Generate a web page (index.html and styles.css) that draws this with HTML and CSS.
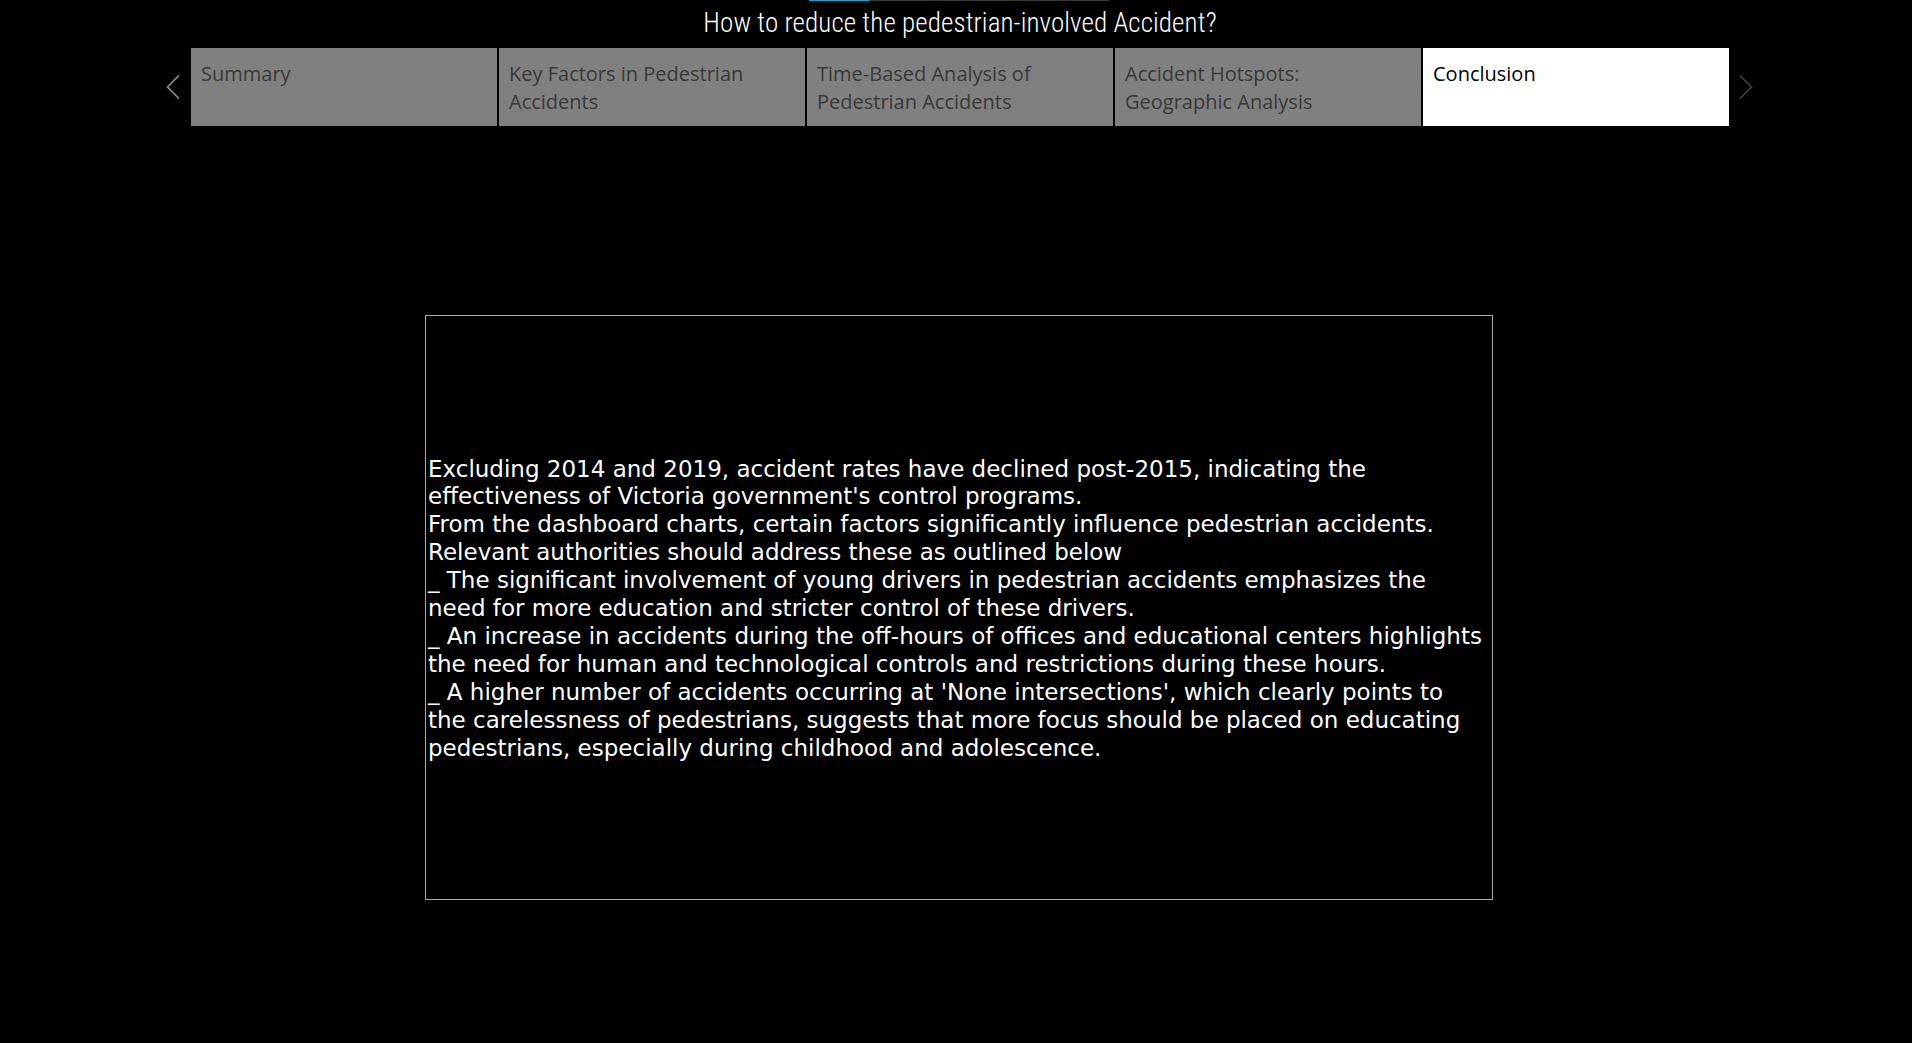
FILE: index.html
```html
<!DOCTYPE html>
<html lang="en">
<head>
<meta charset="utf-8">
<title>How to reduce the pedestrian-involved Accident?</title>
<link rel="stylesheet" href="styles.css">
</head>
<body>
<div class="dash">
  <div class="progress"><div class="progress-fill"></div></div>
  <h1 class="title">How to reduce the pedestrian-involved Accident?</h1>
  <nav class="storybar">
    <button class="arrow arrow-prev" aria-label="Previous">
      <svg width="14" height="24" viewBox="0 0 14 24"><polyline points="13,0.5 1.5,12 13,23.5" fill="none" stroke="currentColor" stroke-width="1.7"/></svg>
    </button>
    <div class="tabs">
      <div class="tab">Summary</div>
      <div class="tab">Key Factors in Pedestrian<br>Accidents</div>
      <div class="tab">Time-Based Analysis of<br>Pedestrian Accidents</div>
      <div class="tab">Accident Hotspots:<br>Geographic Analysis</div>
      <div class="tab tab-active">Conclusion</div>
    </div>
    <button class="arrow arrow-next" aria-label="Next">
      <svg width="14" height="24" viewBox="0 0 14 24"><polyline points="1,0.5 12.5,12 1,23.5" fill="none" stroke="currentColor" stroke-width="1.7"/></svg>
    </button>
  </nav>
  <main class="stage">
    <div class="textbox">
      <p class="note">Excluding 2014 and 2019, accident rates have declined post-2015, indicating the<br>effectiveness of Victoria government's control programs.<br>From the dashboard charts, certain factors significantly influence pedestrian accidents.<br>Relevant authorities should address these as outlined below<br>_ The significant involvement of young drivers in pedestrian accidents emphasizes the<br>need for more education and stricter control of these drivers.<br>_ An increase in accidents during the off-hours of offices and educational centers highlights<br>the need for human and technological controls and restrictions during these hours.<br>_ A higher number of accidents occurring at 'None intersections', which clearly points to<br>the carelessness of pedestrians, suggests that more focus should be placed on educating<br>pedestrians, especially during childhood and adolescence.</p>
    </div>
  </main>
</div>
</body>
</html>
```

FILE: styles.css
```css
html, body {
  margin: 0;
  padding: 0;
  background: #000;
  overflow: hidden;
}

.dash {
  width: 1920px;
  height: 1043px;
  display: flex;
  flex-direction: column;
  align-items: center;
}

.progress {
  width: 300px;
  height: 1px;
  background: #3a3a3a;
  display: flex;
  margin-left: -2px;
}

.progress-fill {
  width: 60px;
  background: #1ba6c9;
}

.title {
  margin: 0;
  height: 46px;
  line-height: 45px;
  font-family: "Roboto Condensed", "Roboto", sans-serif;
  font-weight: 300;
  font-size: 27px;
  letter-spacing: 0.1px;
  color: #fff;
  text-align: center;
}

.storybar {
  display: flex;
  align-items: center;
  margin-top: 1px;
}

.arrow {
  width: 32px;
  height: 78px;
  padding: 0;
  border: 0;
  background: transparent;
  display: flex;
  align-items: center;
  justify-content: center;
}

.arrow-prev {
  color: #8a8a8a;
  padding-right: 4px;
}

.arrow-next {
  color: #3e3e3e;
  padding-left: 2px;
}

.tabs {
  display: flex;
  gap: 2px;
}

.tab {
  width: 306px;
  height: 78px;
  box-sizing: border-box;
  padding: 12px 10px 0;
  background: #808080;
  color: #3a3a3a;
  font-family: "Open Sans", sans-serif;
  font-weight: 500;
  font-size: 20px;
  line-height: 28px;
}

.tab-active {
  background: #fff;
  color: #000;
}

.stage {
  margin-top: 189px;
  margin-left: -2px;
}

.textbox {
  width: 1068px;
  height: 585px;
  box-sizing: border-box;
  border: 1px solid #a9a9a9;
  display: flex;
  align-items: center;
}

.note {
  margin: 0;
  padding: 3px 0 0 2px;
  white-space: nowrap;
  font-family: "DejaVu Sans", sans-serif;
  font-size: 23px;
  line-height: 27.9px;
  color: #fff;
}
```
